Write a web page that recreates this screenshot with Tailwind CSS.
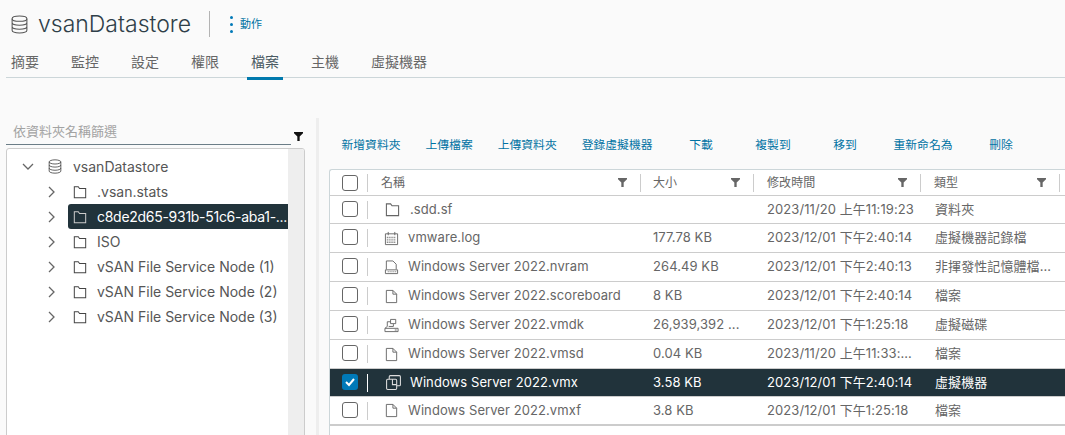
<!DOCTYPE html>
<html lang="zh-TW">
<head>
<meta charset="UTF-8">
<title>vsanDatastore</title>
<script src="https://cdn.jsdelivr.net/npm/@tailwindcss/browser@4"></script>
</head>
<body class="h-[435px] w-[1065px] overflow-hidden bg-[#fafafa] font-['Inter','Noto_Sans_CJK_TC',sans-serif] text-[#666]">
<svg class="hidden">
  <symbol id="folder" viewBox="0 0 16 16"><path d="M1.500 14.500V2h4.500l1.500 2h7v10.500z" fill="none" stroke="currentColor" stroke-width="1.150"/></symbol>
  <symbol id="file" viewBox="0 0 16 16"><path d="M2.500 1.500h7l4 4v9h-11zM9.500 1.500v4h4" fill="none" stroke="currentColor" stroke-width="1"/></symbol>
  <symbol id="log" viewBox="0 0 16 16"><path d="M1.500 3h13v11.500h-13zM4.500 1v3.500M11.500 1v3.500" fill="none" stroke="currentColor" stroke-width="1"/><path d="M3 7h10M3 9.500h10M3 12h10" fill="none" stroke="currentColor" stroke-width="1.500" stroke-dasharray="1 1"/></symbol>
  <symbol id="nvram" viewBox="0 0 16 16"><path d="M2.500 10V1h7l3.500 3.500V10" fill="none" stroke="currentColor" stroke-width="1"/><path d="M1.500 10.500h13v4h-13z" fill="none" stroke="currentColor" stroke-width="1"/><path d="M4 12.500h9" stroke="currentColor" stroke-width="1" stroke-dasharray="1 1"/></symbol>
  <symbol id="vmdk" viewBox="0 0 16 16"><path d="M3.500 9V4h3.500M7 6V1.500h5.500V6H7zM5 9h5V6.500" fill="none" stroke="currentColor" stroke-width="1"/><path d="M1 11h14v3.500H1zM11.500 12.800h2" fill="none" stroke="currentColor" stroke-width="1"/><path d="M3.500 9 1 11" fill="none" stroke="currentColor" stroke-width="1"/></symbol>
  <symbol id="vmx" viewBox="0 0 16 16"><path d="M4 5V2.500a1 1 0 0 1 1-1h8.500a1 1 0 0 1 1 1V10a1 1 0 0 1-1 1H11" fill="none" stroke="currentColor" stroke-width="1"/><rect x="1.500" y="5" width="9.500" height="9.500" rx="1" fill="none" stroke="currentColor" stroke-width="1"/><path d="M7 5v5h4" fill="none" stroke="currentColor" stroke-width="1"/></symbol>
  <symbol id="funnel" viewBox="0 0 10 10"><path d="M0 0h10v1.500L6.300 5v5H3.700V5L0 1.500z" fill="currentColor"/></symbol>
  <symbol id="db" viewBox="0 0 16 18"><ellipse cx="8" cy="3.500" rx="7" ry="2.500" fill="none" stroke="currentColor"/><path d="M1 3.500v11c0 1.400 3.100 2.500 7 2.500s7-1.100 7-2.500v-11M1 7.200c0 1.400 3.100 2.500 7 2.500s7-1.100 7-2.500M1 11c0 1.400 3.100 2.500 7 2.500s7-1.100 7-2.500" fill="none" stroke="currentColor"/></symbol>
  <symbol id="chev" viewBox="0 0 10 12"><path d="M2 1l5 5-5 5" fill="none" stroke="currentColor" stroke-width="1.300"/></symbol>
</svg>

<header class="flex h-[46px] items-center pt-[2px] pl-[11px]">
  <svg class="h-[19px] w-[17px] text-[#565656]"><use href="#db"/></svg>
  <h1 class="ml-[10px] text-[23px] leading-none font-light text-[#2f3f49]">vsanDatastore</h1>
  <div class="ml-[18px] h-[26px] w-px bg-[#b3b3b3]"></div>
  <div class="ml-5 flex flex-col gap-[4px]"><i class="size-[3px] rounded-full bg-[#0079b8]"></i><i class="size-[3px] rounded-full bg-[#0079b8]"></i><i class="size-[3px] rounded-full bg-[#0079b8]"></i></div>
  <span class="ml-[7px] text-[11px] text-[#0072a3]">動作</span>
</header>

<nav class="ml-[6px] flex h-[32px] items-center gap-[24px] border-b border-[#ccd6d9] pl-[1px] text-[14px]">
  <a class="px-1">摘要</a><a class="px-1">監控</a><a class="px-1">設定</a><a class="px-1">權限</a>
  <a class="relative px-1 text-[#4a5a63]">檔案<span class="absolute inset-x-0 -bottom-[8px] h-[3px] bg-[#0079ad]"></span></a>
  <a class="px-1">主機</a><a class="px-1">虛擬機器</a>
</nav>

<main class="flex">
  <aside class="mt-[41px] ml-[6px] w-[299px] shrink-0">
    <div class="flex">
      <div class="h-[26px] w-[285px] border-b border-[#6b7d87] pl-[7px] text-[13px] leading-[24px] text-[#a3a3a3]">依資料夾名稱篩選</div>
      <svg class="mt-[13px] ml-[3px] size-[9px] text-[#111]"><use href="#funnel"/></svg>
    </div>
    <div class="mt-[3px] flex h-[300px] overflow-hidden rounded-[3px] border border-[#ccc] bg-white">
      <ul class="w-[281px] shrink-0 pt-[5px] text-[14px] whitespace-nowrap text-[#565656]">
        <li class="flex h-[25px] items-center"><svg class="ml-4 h-3 w-[10px] rotate-90 text-[#666]"><use href="#chev"/></svg><svg class="ml-[15px] h-[15px] w-[14px] text-[#444]"><use href="#db"/></svg><span class="ml-[11px]">vsanDatastore</span></li>
        <li class="flex h-[25px] items-center"><svg class="ml-10 h-3 w-[10px] text-[#666]"><use href="#chev"/></svg><svg class="ml-4 size-[14px] text-[#444]"><use href="#folder"/></svg><span class="ml-[10px]">.vsan.stats</span></li>
        <li class="flex h-[25px] items-center"><svg class="ml-10 h-3 w-[10px] text-[#666]"><use href="#chev"/></svg><div class="ml-[11px] flex h-[25px] flex-1 items-center overflow-hidden rounded-l-[3px] bg-[#21333b] pl-[5px] text-white"><svg class="size-[14px] shrink-0 text-[#ccc]"><use href="#folder"/></svg><span class="ml-[10px] tracking-[-0.28px]">c8de2d65-931b-51c6-aba1-...</span></div></li>
        <li class="flex h-[25px] items-center"><svg class="ml-10 h-3 w-[10px] text-[#666]"><use href="#chev"/></svg><svg class="ml-4 size-[14px] text-[#444]"><use href="#folder"/></svg><span class="ml-[10px]">ISO</span></li>
        <li class="flex h-[25px] items-center"><svg class="ml-10 h-3 w-[10px] text-[#666]"><use href="#chev"/></svg><svg class="ml-4 size-[14px] text-[#444]"><use href="#folder"/></svg><span class="ml-[10px]">vSAN File Service Node (1)</span></li>
        <li class="flex h-[25px] items-center"><svg class="ml-10 h-3 w-[10px] text-[#666]"><use href="#chev"/></svg><svg class="ml-4 size-[14px] text-[#444]"><use href="#folder"/></svg><span class="ml-[10px]">vSAN File Service Node (2)</span></li>
        <li class="flex h-[25px] items-center"><svg class="ml-10 h-3 w-[10px] text-[#666]"><use href="#chev"/></svg><svg class="ml-4 size-[14px] text-[#444]"><use href="#folder"/></svg><span class="ml-[10px]">vSAN File Service Node (3)</span></li>
      </ul>
      <div class="flex-1 bg-[#eee]"></div>
    </div>
  </aside>

  <div class="mt-[40px] ml-[11px] h-[320px] w-[3px] shrink-0 bg-[#eee]"></div>

  <section class="mt-[40px] ml-[10px] w-[760px] shrink-0">
    <div class="flex h-[51px] items-center pt-[4px] text-[11.800px] whitespace-nowrap text-[#0072a3]">
      <button class="min-w-[72px] px-[12.500px]">新增資料夾</button>
      <button class="min-w-[72px] px-[12.500px]">上傳檔案</button>
      <button class="min-w-[72px] px-[12.500px]">上傳資料夾</button>
      <button class="min-w-[72px] px-[12.500px]">登錄虛擬機器</button>
      <button class="min-w-[72px] px-[12.500px]">下載</button>
      <button class="min-w-[72px] px-[12.500px]">複製到</button>
      <button class="min-w-[72px] px-[12.500px]">移到</button>
      <button class="min-w-[72px] px-[12.500px]">重新命名為</button>
      <button class="min-w-[72px] px-[12.500px]">刪除</button>
    </div>

    <div class="rounded-tl-[3px] border-t border-l border-[#ccd6d9] bg-white text-[13px] tracking-[0.08px]">
      <div class="grid h-[26px] grid-cols-[38px_273px_113px_167px_139px_29px] items-center border-b border-[#ccc] text-[12px]">
        <div class="flex h-[18px] items-center border-r border-[#ccc]"><span class="ml-[12px] size-4 rounded-[3px] border border-[#666]"></span></div>
        <div class="flex h-[18px] items-center justify-between border-r border-[#ccc] pr-[13px] pl-[13px]"><span>名稱</span><svg class="size-[9px]"><use href="#funnel"/></svg></div>
        <div class="flex h-[18px] items-center justify-between border-r border-[#ccc] pr-[13px] pl-3"><span>大小</span><svg class="size-[9px]"><use href="#funnel"/></svg></div>
        <div class="flex h-[18px] items-center justify-between border-r border-[#ccc] pr-[13px] pl-[13px]"><span>修改時間</span><svg class="size-[9px]"><use href="#funnel"/></svg></div>
        <div class="flex h-[18px] items-center justify-between border-r border-[#ccc] pr-[13px] pl-[13px]"><span>類型</span><svg class="size-[9px]"><use href="#funnel"/></svg></div>
      </div>

      <div class="grid h-[28px] grid-cols-[38px_273px_113px_167px_139px_29px] items-center border-b border-[#ccc]">
        <div class="h-[18px] border-r border-[#ccc]"><span class="ml-[12px] block size-4 rounded-[3px] border border-[#666]"></span></div>
        <div class="flex items-center pl-[17px]"><svg class="size-[15px]"><use href="#folder"/></svg><span class="ml-[10px]">.sdd.sf</span></div>
        <div class="pl-3"></div>
        <div class="pl-[13px]">2023/11/20 上午11:19:23</div>
        <div class="pl-[14px]">資料夾</div>
      </div>
      <div class="grid h-[29px] grid-cols-[38px_273px_113px_167px_139px_29px] items-center border-b border-[#ccc]">
        <div class="h-[18px] border-r border-[#ccc]"><span class="ml-[12px] block size-4 rounded-[3px] border border-[#666]"></span></div>
        <div class="flex items-center pl-[16px]"><svg class="size-[15px]"><use href="#log"/></svg><span class="ml-[9px]">vmware.log</span></div>
        <div class="pl-3">177.78 KB</div>
        <div class="pl-[13px]">2023/12/01 下午2:40:14</div>
        <div class="pl-[14px]">虛擬機器記錄檔</div>
      </div>
      <div class="grid h-[29px] grid-cols-[38px_273px_113px_167px_139px_29px] items-center border-b border-[#ccc]">
        <div class="h-[18px] border-r border-[#ccc]"><span class="ml-[12px] block size-4 rounded-[3px] border border-[#666]"></span></div>
        <div class="flex items-center pl-[16px]"><svg class="size-[15px]"><use href="#nvram"/></svg><span class="ml-[9px]">Windows Server 2022.nvram</span></div>
        <div class="pl-3">264.49 KB</div>
        <div class="pl-[13px]">2023/12/01 下午2:40:13</div>
        <div class="pl-[14px]">非揮發性記憶體檔...</div>
      </div>
      <div class="grid h-[29px] grid-cols-[38px_273px_113px_167px_139px_29px] items-center border-b border-[#ccc]">
        <div class="h-[18px] border-r border-[#ccc]"><span class="ml-[12px] block size-4 rounded-[3px] border border-[#666]"></span></div>
        <div class="flex items-center pl-[16px]"><svg class="size-[15px]"><use href="#file"/></svg><span class="ml-[9px]">Windows Server 2022.scoreboard</span></div>
        <div class="pl-3">8 KB</div>
        <div class="pl-[13px]">2023/12/01 下午2:40:14</div>
        <div class="pl-[14px]">檔案</div>
      </div>
      <div class="grid h-[29px] grid-cols-[38px_273px_113px_167px_139px_29px] items-center border-b border-[#ccc]">
        <div class="h-[18px] border-r border-[#ccc]"><span class="ml-[12px] block size-4 rounded-[3px] border border-[#666]"></span></div>
        <div class="flex items-center pl-[16px]"><svg class="size-[15px]"><use href="#vmdk"/></svg><span class="ml-[9px]">Windows Server 2022.vmdk</span></div>
        <div class="pl-3">26,939,392 ...</div>
        <div class="pl-[13px]">2023/12/01 下午1:25:18</div>
        <div class="pl-[14px]">虛擬磁碟</div>
      </div>
      <div class="grid h-[29px] grid-cols-[38px_273px_113px_167px_139px_29px] items-center border-b border-[#ccc]">
        <div class="h-[18px] border-r border-[#ccc]"><span class="ml-[12px] block size-4 rounded-[3px] border border-[#666]"></span></div>
        <div class="flex items-center pl-[16px]"><svg class="size-[15px]"><use href="#file"/></svg><span class="ml-[9px]">Windows Server 2022.vmsd</span></div>
        <div class="pl-3">0.04 KB</div>
        <div class="pl-[13px]">2023/11/20 上午11:33:...</div>
        <div class="pl-[14px]">檔案</div>
      </div>
      <div class="grid h-[28px] grid-cols-[38px_273px_113px_167px_139px_29px] items-center border-b border-[#ccc] bg-[#21333b] text-white">
        <div class="h-[18px] border-r border-white"><span class="ml-[12px] flex size-4 items-center justify-center rounded-[3px] bg-[#0079b8]"><svg class="size-[10px]" viewBox="0 0 10 10"><path d="M1 5l3 3 5-6" fill="none" stroke="white" stroke-width="2"/></svg></span></div>
        <div class="flex items-center pl-[17px]"><svg class="size-[17px] text-[#ddd]"><use href="#vmx"/></svg><span class="ml-[8px]">Windows Server 2022.vmx</span></div>
        <div class="pl-3">3.58 KB</div>
        <div class="pl-[13px]">2023/12/01 下午2:40:14</div>
        <div class="pl-[14px]">虛擬機器</div>
      </div>
      <div class="grid h-[29px] grid-cols-[38px_273px_113px_167px_139px_29px] items-center border-b-2 border-[#ccc]">
        <div class="h-[18px] border-r border-[#ccc]"><span class="ml-[12px] block size-4 rounded-[3px] border border-[#666]"></span></div>
        <div class="flex items-center pl-[16px]"><svg class="size-[15px]"><use href="#file"/></svg><span class="ml-[9px]">Windows Server 2022.vmxf</span></div>
        <div class="pl-3">3.8 KB</div>
        <div class="pl-[13px]">2023/12/01 下午1:25:18</div>
        <div class="pl-[14px]">檔案</div>
      </div>
      <div class="h-[12px]"></div>
    </div>
  </section>
</main>
</body>
</html>
